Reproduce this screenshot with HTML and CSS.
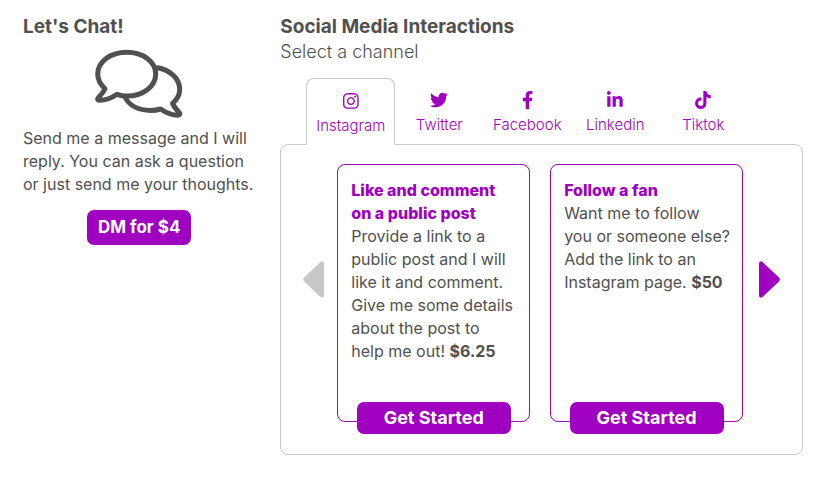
FILE: index.html
```html
<!DOCTYPE html>
<html lang="en">
<head>
<meta charset="utf-8">
<meta name="viewport" content="width=device-width, initial-scale=1">
<title>Let's Chat</title>
<link rel="stylesheet" href="styles.css">
</head>
<body>
<main class="page">
  <section class="chat">
    <h2 class="heading">Let's Chat!</h2>
    <svg class="chat-icon" viewBox="94 49 90 70" aria-hidden="true">
      <path d="M105 88.7C100 84 97.7 79.500 97.700 74C97.700 61.500 110.500 52.200 126.700 52.200C143 52.200 155.700 61.500 155.700 74C155.700 86.500 143 96 127 96C123.500 96 120.500 95.500 117 94.300C111.500 98.200 105.500 100.300 99.500 100.300C97.500 100.300 97.200 98.800 98.500 97.500C101.500 94.500 103.500 92 105 88.700Z"/>
      <path d="M156 67.500C170 69.500 179.700 78.500 179.700 89.500C179.700 95 177 99.500 172.500 103.300C174 107 176.500 109.800 179.200 112.500C180.500 113.800 180 115.200 178 115.200C172 115.200 166 112.800 160.700 109C157.500 110 154.500 110.400 150.500 110.400C138.500 110.400 129 105.500 125 97"/>
    </svg>
    <p class="chat-text">Send me a message and I will reply. You can ask a question or just send me your thoughts.</p>
    <button class="button dm" type="button">DM for $4</button>
  </section>

  <section class="social">
    <h2 class="heading">Social Media Interactions</h2>
    <p class="subheading">Select a channel</p>
    <div class="tabs" role="tablist">
      <button class="tab active" type="button" role="tab" aria-selected="true">
        <svg class="tab-icon" viewBox="0 0 448 512" aria-hidden="true"><path d="M224.100 141c-63.600 0-114.900 51.300-114.900 114.900s51.300 114.900 114.900 114.900S339 319.500 339 255.900 287.700 141 224.100 141zm0 189.600c-41.100 0-74.700-33.500-74.700-74.700s33.500-74.700 74.700-74.700 74.700 33.500 74.700 74.700-33.600 74.700-74.700 74.700zm146.400-194.300c0 14.900-12 26.800-26.800 26.800-14.900 0-26.800-12-26.800-26.800s12-26.800 26.800-26.800 26.800 12 26.800 26.800zm76.100 27.200c-1.700-35.900-9.900-67.700-36.200-93.900-26.200-26.200-58-34.400-93.900-36.200-37-2.100-147.900-2.100-184.900 0-35.800 1.700-67.600 9.900-93.900 36.100s-34.400 58-36.200 93.900c-2.100 37-2.100 147.900 0 184.900 1.700 35.900 9.900 67.700 36.200 93.900s58 34.400 93.900 36.200c37 2.100 147.900 2.100 184.900 0 35.900-1.700 67.700-9.900 93.900-36.200 26.200-26.200 34.400-58 36.200-93.900 2.100-37 2.100-147.800 0-184.800zM398.800 388c-7.800 19.600-22.900 34.700-42.600 42.600-29.500 11.700-99.500 9-132.100 9s-102.700 2.600-132.100-9c-19.600-7.800-34.700-22.900-42.600-42.600-11.700-29.500-9-99.500-9-132.100s-2.600-102.700 9-132.100c7.800-19.600 22.900-34.700 42.600-42.600 29.500-11.700 99.500-9 132.100-9s102.700-2.600 132.100 9c19.600 7.800 34.700 22.900 42.600 42.600 11.700 29.500 9 99.500 9 132.100s2.700 102.700-9 132.100z"/></svg>
        <span>Instagram</span>
      </button>
      <button class="tab" type="button" role="tab" aria-selected="false">
        <svg class="tab-icon" viewBox="0 0 512 512" aria-hidden="true"><path d="M459.370 151.716c.325 4.548.325 9.097.325 13.645 0 138.720-105.583 298.558-298.558 298.558-59.452 0-114.680-17.219-161.137-47.106 8.447.974 16.568 1.299 25.340 1.299 49.055 0 94.213-16.568 130.274-44.832-46.132-.975-84.792-31.188-98.112-72.772 6.498.974 12.995 1.624 19.818 1.624 9.421 0 18.843-1.300 27.614-3.573-48.081-9.747-84.143-51.980-84.143-102.985v-1.299c13.969 7.797 30.214 12.670 47.431 13.319-28.264-18.843-46.781-51.005-46.781-87.391 0-19.492 5.197-37.360 14.294-52.954 51.655 63.675 129.300 105.258 216.365 109.807-1.624-7.797-2.599-15.918-2.599-24.040 0-57.828 46.782-104.934 104.934-104.934 30.213 0 57.502 12.670 76.671 33.137 23.715-4.548 46.456-13.320 66.599-25.340-7.798 24.366-24.366 44.833-46.132 57.827 21.117-2.273 41.584-8.122 60.426-16.243-14.292 20.791-32.161 39.308-52.628 54.253z"/></svg>
        <span>Twitter</span>
      </button>
      <button class="tab" type="button" role="tab" aria-selected="false">
        <svg class="tab-icon" viewBox="0 0 320 512" aria-hidden="true"><path d="M279.140 288l14.220-92.660h-88.910v-60.130c0-25.350 12.420-50.060 52.240-50.060h40.420V6.260S260.430 0 225.360 0c-73.220 0-121.080 44.380-121.080 124.720v70.620H22.890V288h81.390v224h100.170V288z"/></svg>
        <span>Facebook</span>
      </button>
      <button class="tab" type="button" role="tab" aria-selected="false">
        <svg class="tab-icon" viewBox="0 0 448 512" aria-hidden="true"><path d="M100.280 448H7.400V148.900h92.880zM53.790 108.100C24.090 108.100 0 83.500 0 53.800a53.790 53.790 0 0 1 107.580 0c0 29.700-24.100 54.300-53.790 54.300zM447.900 448h-92.680V302.400c0-34.700-.7-79.200-48.290-79.200-48.290 0-55.690 37.700-55.690 76.700V448h-92.780V148.900h89.080v40.800h1.300c12.400-23.500 42.690-48.300 87.880-48.300 94 0 111.280 61.900 111.280 142.300V448z"/></svg>
        <span>Linkedin</span>
      </button>
      <button class="tab" type="button" role="tab" aria-selected="false">
        <svg class="tab-icon" viewBox="0 0 448 512" aria-hidden="true"><path d="M448 209.910a210.060 210.060 0 0 1-122.770-39.250v178.720A162.550 162.550 0 1 1 185 188.310v89.890a74.620 74.620 0 1 0 52.230 71.180V0h88a121.180 121.180 0 0 0 1.860 22.170A122.180 122.180 0 0 0 381 102.390a121.430 121.430 0 0 0 67 20.140z"/></svg>
        <span>Tiktok</span>
      </button>
    </div>

    <div class="panel" role="tabpanel">
      <button class="arrow previous" type="button" aria-label="Previous" disabled>
        <svg class="arrow-icon" viewBox="0 0 21 37" aria-hidden="true"><path d="M17.500 1L1 16.500Q-.5 18.500 1 20.500L17.500 36Q21 38 21 34V3Q21-1 17.500 1Z"/></svg>
      </button>
      <div class="cards">
        <article class="card">
          <h3 class="card-title">Like and comment<br>on a public post</h3>
          <p class="card-text">Provide a link to a<br>public post and I will<br>like it and comment.<br>Give me some details<br>about the post to<br>help me out! <strong>$6.25</strong></p>
          <button class="button start" type="button">Get Started</button>
        </article>
        <article class="card">
          <h3 class="card-title">Follow a fan</h3>
          <p class="card-text">Want me to follow<br>you or someone else?<br>Add the link to an<br>Instagram page. <strong>$50</strong></p>
          <button class="button start" type="button">Get Started</button>
        </article>
      </div>
      <button class="arrow" type="button" aria-label="Next">
        <svg class="arrow-icon" viewBox="0 0 21 37" aria-hidden="true"><path d="M3.500 1L20 16.500Q21.500 18.500 20 20.500L3.500 36Q0 38 0 34V3Q0-1 3.500 1Z"/></svg>
      </button>
    </div>
  </section>
</main>
</body>
</html>
```
FILE: styles.css
```css
* {
  box-sizing: border-box;
}

body {
  margin: 0;
  background: #fff;
  color: #505050;
  font-family: Inter, "Open Sans", sans-serif;
  font-size: 16px;
  line-height: 23px;
}

h2, h3, p {
  margin: 0;
}

button {
  font: inherit;
  cursor: pointer;
}

strong {
  font-weight: 700;
}

.page {
  display: grid;
  grid-template-columns: 4fr 9fr;
  column-gap: 25px;
  padding: 14px 17px 23px 23px;
}

.chat {
  display: flex;
  flex-direction: column;
  align-items: center;
}

.heading {
  align-self: flex-start;
  font-size: 19px;
  line-height: 25px;
  font-weight: 700;
}

.chat-icon {
  width: 90px;
  height: 70px;
  margin: 10px 0 8px;
  fill: none;
  stroke: #505050;
  stroke-width: 5;
  stroke-linejoin: round;
}

.button {
  border: 0;
  border-radius: 7px;
  background: #a000c0;
  color: #fff;
  font-size: 17px;
  font-weight: 700;
}

.dm {
  margin-top: 14px;
  padding: 6px 11px;
}

.subheading {
  font-size: 18px;
  line-height: 26px;
  font-weight: 300;
}

.tabs {
  display: grid;
  grid-template-columns: 89px repeat(4, 88px);
  margin: 13px 0 -1px 26px;
}

.tab {
  display: flex;
  flex-direction: column;
  align-items: center;
  gap: 4px;
  padding: 13px 0 7px;
  border: 0;
  background: none;
  color: #a000c0;
  font-size: 15px;
  font-weight: 300;
}

.tab.active {
  position: relative;
  border: 1px solid #c8c8c8;
  border-bottom-color: #fff;
  border-radius: 8px 8px 0 0;
  background: #fff;
}

.tab-icon {
  height: 18px;
  overflow: visible;
  fill: currentColor;
}

.panel {
  display: flex;
  padding: 19px 22px 32px;
  border: 1px solid #c8c8c8;
  border-radius: 8px;
}

.cards {
  flex: 1;
  display: grid;
  grid-template-columns: 1fr 1fr;
  gap: 20px;
  margin: 0 16px 0 13px;
}

.card {
  display: flex;
  flex-direction: column;
  min-height: 258px;
  padding: 14px 8px 13px 13px;
  border: 1px solid #a000c0;
  border-radius: 8px;
}

.card-title {
  color: #a000c0;
  font-size: 16px;
  font-weight: 800;
}

.start {
  align-self: center;
  width: 154px;
  margin: auto 5px -26px 0;
  padding: 4px 0 5px;
  font-size: 18px;
}

.arrow {
  align-self: center;
  margin-bottom: 28px;
  padding: 0;
  border: 0;
  background: none;
  color: #a000c0;
}

.previous {
  color: #c8c8c8;
}

.arrow-icon {
  display: block;
  width: 21px;
  height: 37px;
  fill: currentColor;
}
```
